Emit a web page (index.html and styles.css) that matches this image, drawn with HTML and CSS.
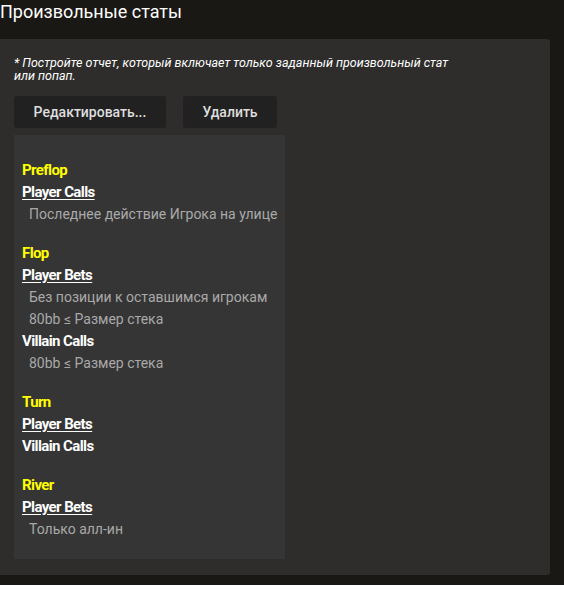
FILE: index.html
```html
<!DOCTYPE html>
<html lang="ru">
<head>
<meta charset="utf-8">
<link rel="stylesheet" href="styles.css">
</head>
<body>
<div class="page">
  <h1 class="title">Произвольные статы</h1>
  <div class="panel">
    <p class="note">* Постройте отчет, который включает только заданный произвольный стат или попап.</p>
    <div class="actions">
      <button class="btn btn-edit">Редактировать...</button>
      <button class="btn btn-delete">Удалить</button>
    </div>
    <div class="report">
      <div class="street">
        <div class="street-name">Preflop</div>
        <div class="action-name underline">Player Calls</div>
        <div class="cond">Последнее действие Игрока на улице</div>
      </div>
      <div class="street">
        <div class="street-name">Flop</div>
        <div class="action-name underline">Player Bets</div>
        <div class="cond">Без позиции к оставшимся игрокам</div>
        <div class="cond">80bb ≤ Размер стека</div>
        <div class="action-name">Villain Calls</div>
        <div class="cond">80bb ≤ Размер стека</div>
      </div>
      <div class="street">
        <div class="street-name">Turn</div>
        <div class="action-name underline">Player Bets</div>
        <div class="action-name">Villain Calls</div>
      </div>
      <div class="street">
        <div class="street-name">River</div>
        <div class="action-name underline">Player Bets</div>
        <div class="cond">Только алл-ин</div>
      </div>
    </div>
  </div>
</div>
</body>
</html>
```

FILE: styles.css
```css
html, body {
  margin: 0;
  padding: 0;
  background: #ffffff;
}
.page {
  width: 564px;
  height: 585px;
  background: #1a1814;
  font-family: Roboto, "Liberation Sans", sans-serif;
  display: flex;
  flex-direction: column;
  box-sizing: border-box;
}
.title {
  margin: 0;
  height: 39px;
  box-sizing: border-box;
  padding: 1px 0 0 0;
  font-size: 18px;
  font-weight: 400;
  color: #ffffff;
  line-height: 22px;
}
.panel {
  width: 550px;
  height: 536px;
  background: #2e2d2b;
  border-radius: 0 3px 3px 0;
  box-sizing: border-box;
  padding: 17px 0 0 14px;
  display: flex;
  flex-direction: column;
}
.note {
  margin: 0;
  width: 445px;
  font-size: 12.5px;
  font-style: italic;
  line-height: 13px;
  color: #ffffff;
}
.actions {
  display: flex;
  gap: 17px;
  margin-top: 14px;
}
.btn {
  height: 32px;
  border: none;
  border-radius: 3px;
  background: #212121;
  color: #dedede;
  font-family: Roboto, "Liberation Sans", sans-serif;
  font-size: 14px;
  font-weight: 500;
  padding: 0;
}
.btn-edit { width: 152px; }
.btn-delete { width: 94px; }
.report {
  margin-top: 7px;
  width: 271px;
  height: 424px;
  background: #353535;
  box-sizing: border-box;
  padding: 24px 0 0 8px;
  display: flex;
  flex-direction: column;
  gap: 17px;
}
.street {
  display: flex;
  flex-direction: column;
}
.street > div {
  line-height: 22px;
  font-size: 14px;
}
.street > .street-name {
  color: #ffff00;
  font-weight: 700;
  font-size: 15px;
  letter-spacing: -0.6px;
}
.street > .action-name {
  color: #ffffff;
  font-weight: 700;
  font-size: 15px;
  letter-spacing: -0.6px;
}
.underline {
  text-decoration: underline;
  text-underline-offset: 2px;
}
.street > .cond {
  color: #a9a9a9;
  padding-left: 7px;
  font-size: 14px;
}
```
